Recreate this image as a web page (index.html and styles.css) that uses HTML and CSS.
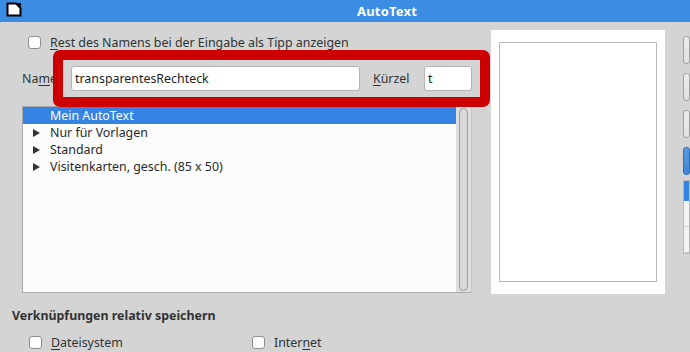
FILE: index.html
```html
<!DOCTYPE html>
<html lang="de">
<head>
<meta charset="utf-8">
<title>AutoText</title>
<link rel="stylesheet" href="styles.css">
</head>
<body>
<div class="window">
  <header class="titlebar">
    <svg class="app-icon" width="16" height="15" viewBox="0 0 16 15">
      <path d="M1.5 1.5 H10 L14.5 6 V13.5 H1.5 Z" fill="#fff" stroke="#000" stroke-width="2" stroke-linejoin="miter"/>
      <path d="M9 1 L15 1 L15 7 Z" fill="#000"/>
    </svg>
    <div class="title">AutoText</div>
  </header>

  <main class="content">
    <div class="top">
      <section class="left">
        <label class="check-row tip-row">
          <span class="checkbox"></span>
          <span><u>R</u>est des Namens bei der Eingabe als Tipp anzeigen</span>
        </label>

        <div class="name-row">
          <span class="lbl name-lbl">Na<u>m</u>e</span>
          <div class="field name-field">transparentesRechteck</div>
          <span class="lbl short-lbl"><u>K</u>ürzel</span>
          <div class="field short-field">t</div>
        </div>

        <div class="tree">
          <ul class="tree-items">
            <li class="item selected"><span class="arrow"></span>Mein AutoText</li>
            <li class="item"><span class="arrow"><i class="tri"></i></span>Nur für Vorlagen</li>
            <li class="item"><span class="arrow"><i class="tri"></i></span>Standard</li>
            <li class="item"><span class="arrow"><i class="tri"></i></span>Visitenkarten, gesch. (85 x 50)</li>
          </ul>
          <div class="scroll"><div class="slot"></div></div>
        </div>
      </section>

      <section class="preview">
        <div class="page"></div>
      </section>

      <aside class="buttons">
        <div class="btn"></div>
        <div class="btn"></div>
        <div class="btn"></div>
        <div class="btn primary"></div>
        <div class="menu">
          <div class="menu-item active"></div>
          <div class="menu-item"></div>
          <div class="menu-item"></div>
        </div>
      </aside>
    </div>

    <section class="links">
      <h2 class="links-title">Verknüpfungen relativ speichern</h2>
      <div class="links-row">
        <label class="check-row fs">
          <span class="checkbox"></span>
          <span><u>D</u>ateisystem</span>
        </label>
        <label class="check-row">
          <span class="checkbox"></span>
          <span>Inter<u>n</u>et</span>
        </label>
      </div>
    </section>

    <div class="highlight-box"></div>
  </main>
</div>
</body>
</html>
```

FILE: styles.css
```css
* { box-sizing: border-box; }

html, body {
  margin: 0;
  padding: 0;
}

body {
  width: 690px;
  height: 352px;
  overflow: hidden;
  background: #d4d4d4;
  font-family: "Noto Sans", "Open Sans", sans-serif;
  font-size: 12.4px;
  color: #2e3436;
}

.window {
  width: 690px;
  height: 352px;
  position: relative;
}

.titlebar {
  height: 22px;
  background: #3b8ce3;
  display: flex;
  align-items: center;
  padding-left: 6px;
}

.app-icon { display: block; margin-top: -3px; }

.title {
  margin-left: 335px;
  color: #fff;
  font-weight: bold;
  font-size: 13px;
  letter-spacing: 0.2px;
}

.content {
  position: relative;
  padding-left: 12px;
}

.top {
  display: flex;
  align-items: flex-start;
}

.left {
  width: 460px;
  padding-top: 11px;
}

u { text-decoration: underline; text-underline-offset: 2px; }

.check-row {
  display: flex;
  align-items: center;
  height: 18px;
}

.tip-row { padding-left: 16px; }

.checkbox {
  width: 13px;
  height: 13px;
  border: 1px solid #8e8e8e;
  border-radius: 3px;
  background: #fdfdfd;
  margin-right: 9px;
  flex: none;
}

.name-row {
  margin-top: 15px;
  height: 25px;
  display: flex;
  align-items: center;
  padding-left: 10px;
}

.name-lbl { width: 49px; }
.short-lbl { margin-left: 13px; width: 51px; }

.field {
  height: 25px;
  background: #fff;
  border: 1px solid #b4b4b4;
  border-radius: 3px;
  padding-left: 3px;
  line-height: 23px;
  color: #1e1e1e;
}

.name-field { width: 289px; }
.short-field { width: 48px; }

.tree {
  margin-top: 15px;
  margin-left: 10px;
  width: 450px;
  height: 187px;
  border: 1px solid #a9a9a9;
  border-right-color: #c4c4c4;
  background: #fcfcfc;
  display: flex;
}

.tree-items {
  list-style: none;
  margin: 0;
  padding: 0;
  width: 433px;
}

.item {
  height: 17px;
  line-height: 16px;
  display: flex;
  align-items: center;
  color: #2a2a2a;
}

.item.selected {
  background: #3584e4;
  color: #fff;
}

.arrow {
  width: 27px;
  padding-left: 10px;
  display: flex;
  align-items: center;
  height: 17px;
}

.tri {
  width: 0;
  height: 0;
  border-left: 7px solid #333;
  border-top: 4px solid transparent;
  border-bottom: 4px solid transparent;
}

.scroll {
  flex: 1;
  background: #dedede;
  padding: 1px 2px 1px 3px;
}

.slot {
  height: 100%;
  width: 9px;
  border: 1px solid #9d9d9d;
  border-radius: 5px;
  background: #d8d8d8;
}

.preview {
  margin-left: 19px;
  margin-top: 8px;
  width: 174px;
  height: 264px;
  background: #fff;
  padding: 12px 8px;
}

.page {
  width: 158px;
  height: 240px;
  border: 1px solid #b9b9b9;
}

.buttons {
  margin-left: 18px;
  margin-top: 14px;
  width: 60px;
  display: flex;
  flex-direction: column;
  gap: 9px;
}

.btn {
  height: 28px;
  border: 1px solid #a0a0a0;
  border-radius: 3px;
  background: linear-gradient(#ececec, #e0e0e0);
}

.btn.primary {
  background: linear-gradient(#5a9be0, #3f86d6);
  border-color: #2f6fb8;
}

.menu {
  margin-top: -4px;
  border: 1px solid #b8b8b8;
  background: #f2f2f2;
}

.menu-item {
  height: 26px;
  border-bottom: 1px solid #cfcfcf;
}

.menu-item.active {
  height: 20px;
  background: #3584e4;
  border-bottom: none;
}

.links { padding-top: 13px; }

.links-title {
  margin: 0;
  font-size: 12.4px;
  font-weight: bold;
  height: 18px;
  line-height: 18px;
  color: #333;
}

.links-row {
  margin-top: 8px;
  display: flex;
  padding-left: 17px;
}

.links-row .fs { width: 223px; }

.highlight-box {
  position: absolute;
  left: 53px;
  top: 28px;
  width: 437px;
  height: 57px;
  border: 10px solid #cc0000;
  border-radius: 7px;
}
```
